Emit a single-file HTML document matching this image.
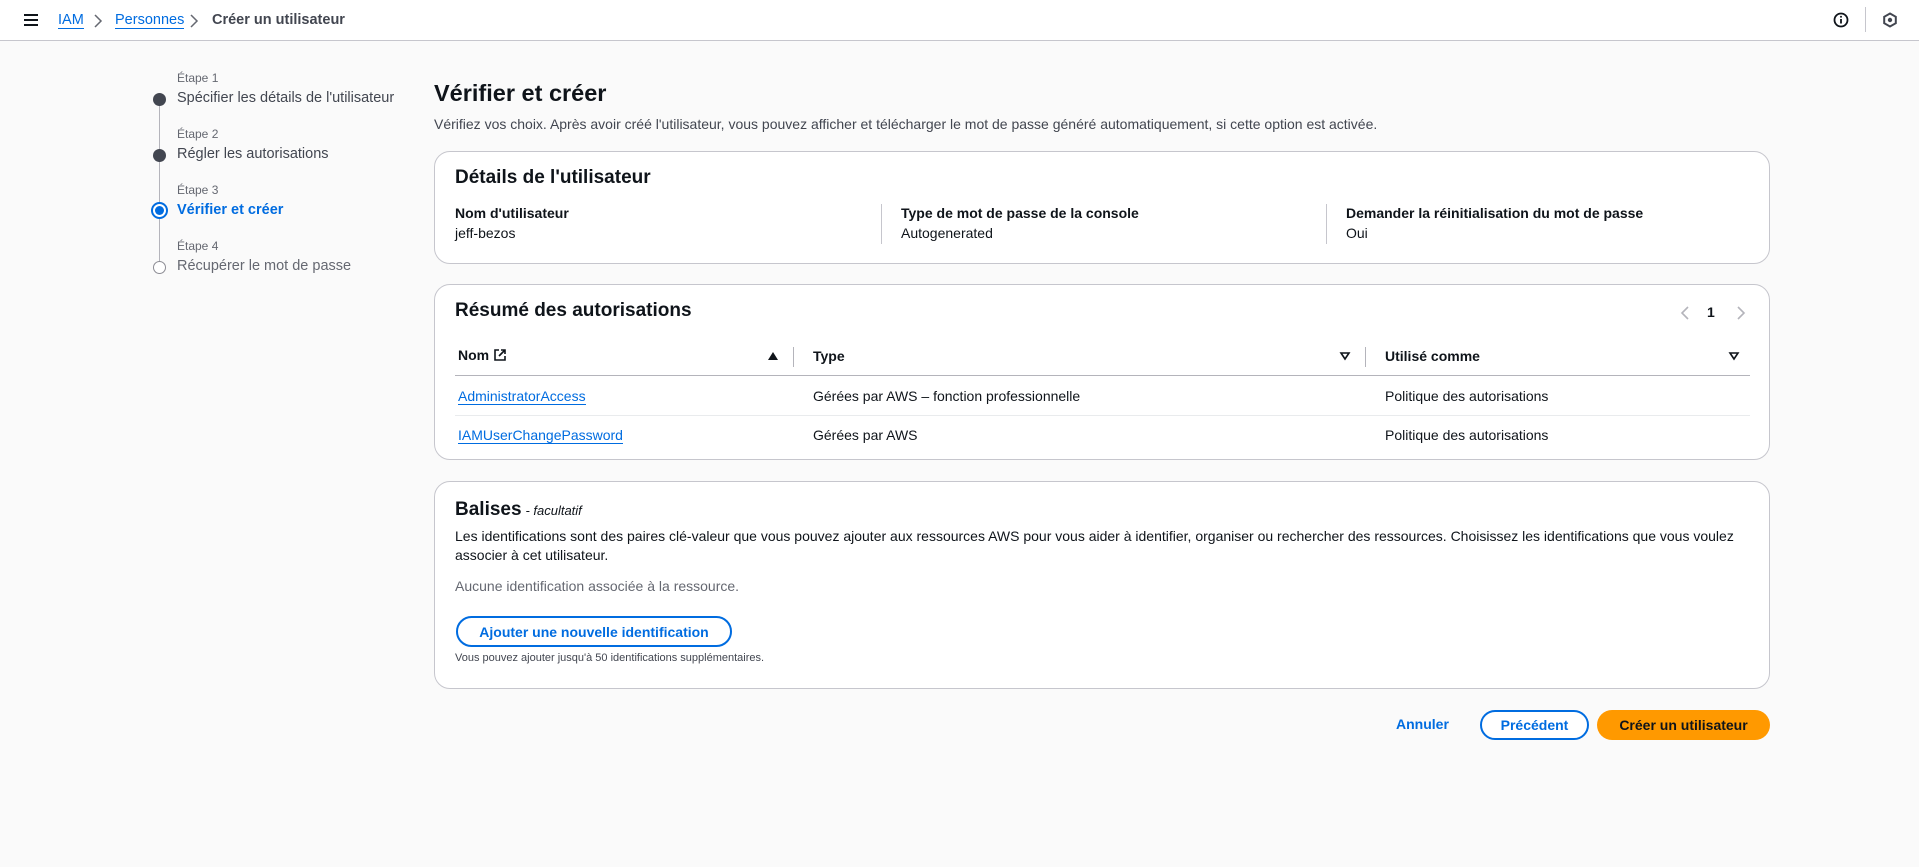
<!DOCTYPE html>
<html><head><meta charset="utf-8"><style>
*{box-sizing:border-box;margin:0;padding:0}
body{width:1919px;height:867px;background:#fafafa;font-family:"Liberation Sans",sans-serif;color:#0f141a;font-size:14px;position:relative;overflow:hidden}
.abs{position:absolute;white-space:nowrap}
.hdr{position:absolute;left:0;top:0;width:1919px;height:41px;background:#fff;border-bottom:1px solid #c6c6cd}
a{color:#006ce0;text-decoration:none;border-bottom:1px solid #006ce0}
.card{position:absolute;left:434px;width:1336px;background:#fff;border:1px solid #c6c6cd;border-radius:16px}
.h2{font-size:19px;font-weight:bold}
.lbl{font-weight:bold}
.sm{font-size:12px;color:#656871}
.dot{position:absolute;left:153px;width:13px;height:13px;border-radius:50%;background:#424650}
.btn{position:absolute;border-radius:20px;font-weight:bold;display:flex;align-items:center;justify-content:center;font-size:14px}
</style></head><body>
<div class="hdr"></div>
<svg class="abs" style="left:23px;top:13px" width="16" height="14"><path d="M1 2h14M1 7h14M1 12h14" stroke="#0f141a" stroke-width="2"/></svg>
<div class="abs" style="left:58px;top:12px;font-size:14.5px"><a>IAM</a></div>
<svg class="abs" style="left:93px;top:13px" width="10" height="16"><path d="M2 2l6 6-6 6" stroke="#656871" stroke-width="1.5" fill="none"/></svg>
<div class="abs" style="left:115px;top:12px;font-size:14.5px"><a>Personnes</a></div>
<svg class="abs" style="left:189px;top:13px" width="10" height="16"><path d="M2 2l6 6-6 6" stroke="#656871" stroke-width="1.5" fill="none"/></svg>
<div class="abs" style="left:212px;top:12px;font-size:14.5px;font-weight:bold;color:#424650">Créer un utilisateur</div>
<svg class="abs" style="left:1833px;top:12px" width="16" height="16"><circle cx="8" cy="8" r="6.5" stroke="#0f141a" stroke-width="1.8" fill="none"/><path d="M8 7v4.5" stroke="#0f141a" stroke-width="1.8"/><circle cx="8" cy="4.8" r="1" fill="#0f141a"/></svg>
<div class="abs" style="left:1865px;top:7px;width:1px;height:25px;background:#c6c6cd"></div>
<svg class="abs" style="left:1882px;top:12px" width="16" height="16"><path d="M8 1.5l5.8 3.3v6.4L8 14.5 2.2 11.2V4.8z" stroke="#424650" stroke-width="2" fill="none"/><circle cx="8" cy="8" r="2.2" fill="#424650"/></svg>

<div class="abs" style="left:159px;top:105px;width:1px;height:160px;background:#b4b4bb"></div>
<div class="abs sm" style="left:177px;top:71px">Étape 1</div>
<div class="abs" style="left:177px;top:90px;font-size:14.5px;color:#424650">Spécifier les détails de l'utilisateur</div>
<div class="dot" style="top:93px"></div>
<div class="abs sm" style="left:177px;top:127px">Étape 2</div>
<div class="abs" style="left:177px;top:146px;font-size:14.5px;color:#424650">Régler les autorisations</div>
<div class="dot" style="top:149px"></div>
<div class="abs sm" style="left:177px;top:183px">Étape 3</div>
<div class="abs" style="left:177px;top:202px;font-size:14.5px;color:#006ce0;font-weight:bold">Vérifier et créer</div>
<div class="abs" style="left:151px;top:202px;width:17px;height:17px;border-radius:50%;border:2px solid #006ce0;background:#fff"></div>
<div class="abs" style="left:155px;top:206px;width:9px;height:9px;border-radius:50%;background:#006ce0"></div>
<div class="abs sm" style="left:177px;top:239px">Étape 4</div>
<div class="abs" style="left:177px;top:258px;font-size:14.5px;color:#656871">Récupérer le mot de passe</div>
<div class="abs" style="left:153px;top:261px;width:13px;height:13px;border-radius:50%;border:1.5px solid #8c8c94;background:#fff"></div>

<div class="abs" style="left:434px;top:80px;font-size:23.5px;font-weight:bold">Vérifier et créer</div>
<div class="abs" style="left:434px;top:116px;font-size:14px;color:#424650">Vérifiez vos choix. Après avoir créé l'utilisateur, vous pouvez afficher et télécharger le mot de passe généré automatiquement, si cette option est activée.</div>

<div class="card" style="top:151px;height:113px">
<div class="abs h2" style="left:20px;top:15px">Détails de l'utilisateur</div>
<div class="abs lbl" style="left:20px;top:53px">Nom d'utilisateur</div>
<div class="abs" style="left:20px;top:73px">jeff-bezos</div>
<div class="abs" style="left:446px;top:52px;width:1px;height:40px;background:#c6c6cd"></div>
<div class="abs lbl" style="left:466px;top:53px">Type de mot de passe de la console</div>
<div class="abs" style="left:466px;top:73px">Autogenerated</div>
<div class="abs" style="left:891px;top:52px;width:1px;height:40px;background:#c6c6cd"></div>
<div class="abs lbl" style="left:911px;top:53px">Demander la réinitialisation du mot de passe</div>
<div class="abs" style="left:911px;top:73px">Oui</div>
</div>

<div class="card" style="top:284px;height:176px">
<div class="abs h2" style="left:20px;top:15px">Résumé des autorisations</div>
<svg class="abs" style="left:1244px;top:20px" width="12" height="16"><path d="M9 2L3 8l6 6" stroke="#b4b4bb" stroke-width="1.6" fill="none"/></svg>
<div class="abs" style="left:1272px;top:19px;font-weight:bold">1</div>
<svg class="abs" style="left:1300px;top:20px" width="12" height="16"><path d="M3 2l6 6-6 6" stroke="#b4b4bb" stroke-width="1.6" fill="none"/></svg>
<div class="abs lbl" style="left:23px;top:62px">Nom</div>
<svg class="abs" style="left:58px;top:63px" width="14" height="14"><path d="M6 2H2v10h10V8M8 2h4v4M12 2L6 8" stroke="#0f141a" stroke-width="1.6" fill="none"/></svg>
<svg class="abs" style="left:332px;top:66px" width="12" height="10"><path d="M1 9h10L6 1z" fill="#0f141a"/></svg>
<div class="abs" style="left:358px;top:62px;width:1px;height:20px;background:#b4b4bb"></div>
<div class="abs lbl" style="left:378px;top:63px">Type</div>
<svg class="abs" style="left:904px;top:66px" width="12" height="10"><path d="M2 2h8L6 8z" stroke="#0f141a" stroke-width="1.6" fill="none"/></svg>
<div class="abs" style="left:930px;top:62px;width:1px;height:20px;background:#b4b4bb"></div>
<div class="abs lbl" style="left:950px;top:63px">Utilisé comme</div>
<svg class="abs" style="left:1293px;top:66px" width="12" height="10"><path d="M2 2h8L6 8z" stroke="#0f141a" stroke-width="1.6" fill="none"/></svg>
<div class="abs" style="left:20px;top:90px;width:1295px;height:1px;background:#b4b4bb"></div>
<div class="abs" style="left:23px;top:103px"><a>AdministratorAccess</a></div>
<div class="abs" style="left:378px;top:103px">Gérées par AWS – fonction professionnelle</div>
<div class="abs" style="left:950px;top:103px">Politique des autorisations</div>
<div class="abs" style="left:20px;top:130px;width:1295px;height:1px;background:#e9ebed"></div>
<div class="abs" style="left:23px;top:142px"><a>IAMUserChangePassword</a></div>
<div class="abs" style="left:378px;top:142px">Gérées par AWS</div>
<div class="abs" style="left:950px;top:142px">Politique des autorisations</div>
</div>

<div class="card" style="top:481px;height:208px">
<div class="abs" style="left:20px;top:17px"><span class="h2">Balises</span> <i style="font-size:13px"> - facultatif</i></div>
<div class="abs" style="left:20px;top:45px;white-space:normal;width:1300px;line-height:19px;color:#0f141a">Les identifications sont des paires clé-valeur que vous pouvez ajouter aux ressources AWS pour vous aider à identifier, organiser ou rechercher des ressources. Choisissez les identifications que vous voulez associer à cet utilisateur.</div>
<div class="abs" style="left:20px;top:96px;color:#656871">Aucune identification associée à la ressource.</div>
<div class="btn" style="left:21px;top:134px;width:276px;height:31px;border:2px solid #006ce0;color:#006ce0;background:#fff">Ajouter une nouvelle identification</div>
<div class="abs" style="left:20px;top:170px;font-size:11px;color:#424650">Vous pouvez ajouter jusqu'à 50 identifications supplémentaires.</div>
</div>

<div class="abs" style="left:1396px;top:716px;color:#006ce0;font-weight:bold">Annuler</div>
<div class="btn" style="left:1480px;top:710px;width:109px;height:30px;border:2px solid #006ce0;color:#006ce0;background:#fff">Précédent</div>
<div class="btn" style="left:1597px;top:710px;width:173px;height:30px;background:#ff9900;color:#0f141a">Créer un utilisateur</div>
</body></html>
